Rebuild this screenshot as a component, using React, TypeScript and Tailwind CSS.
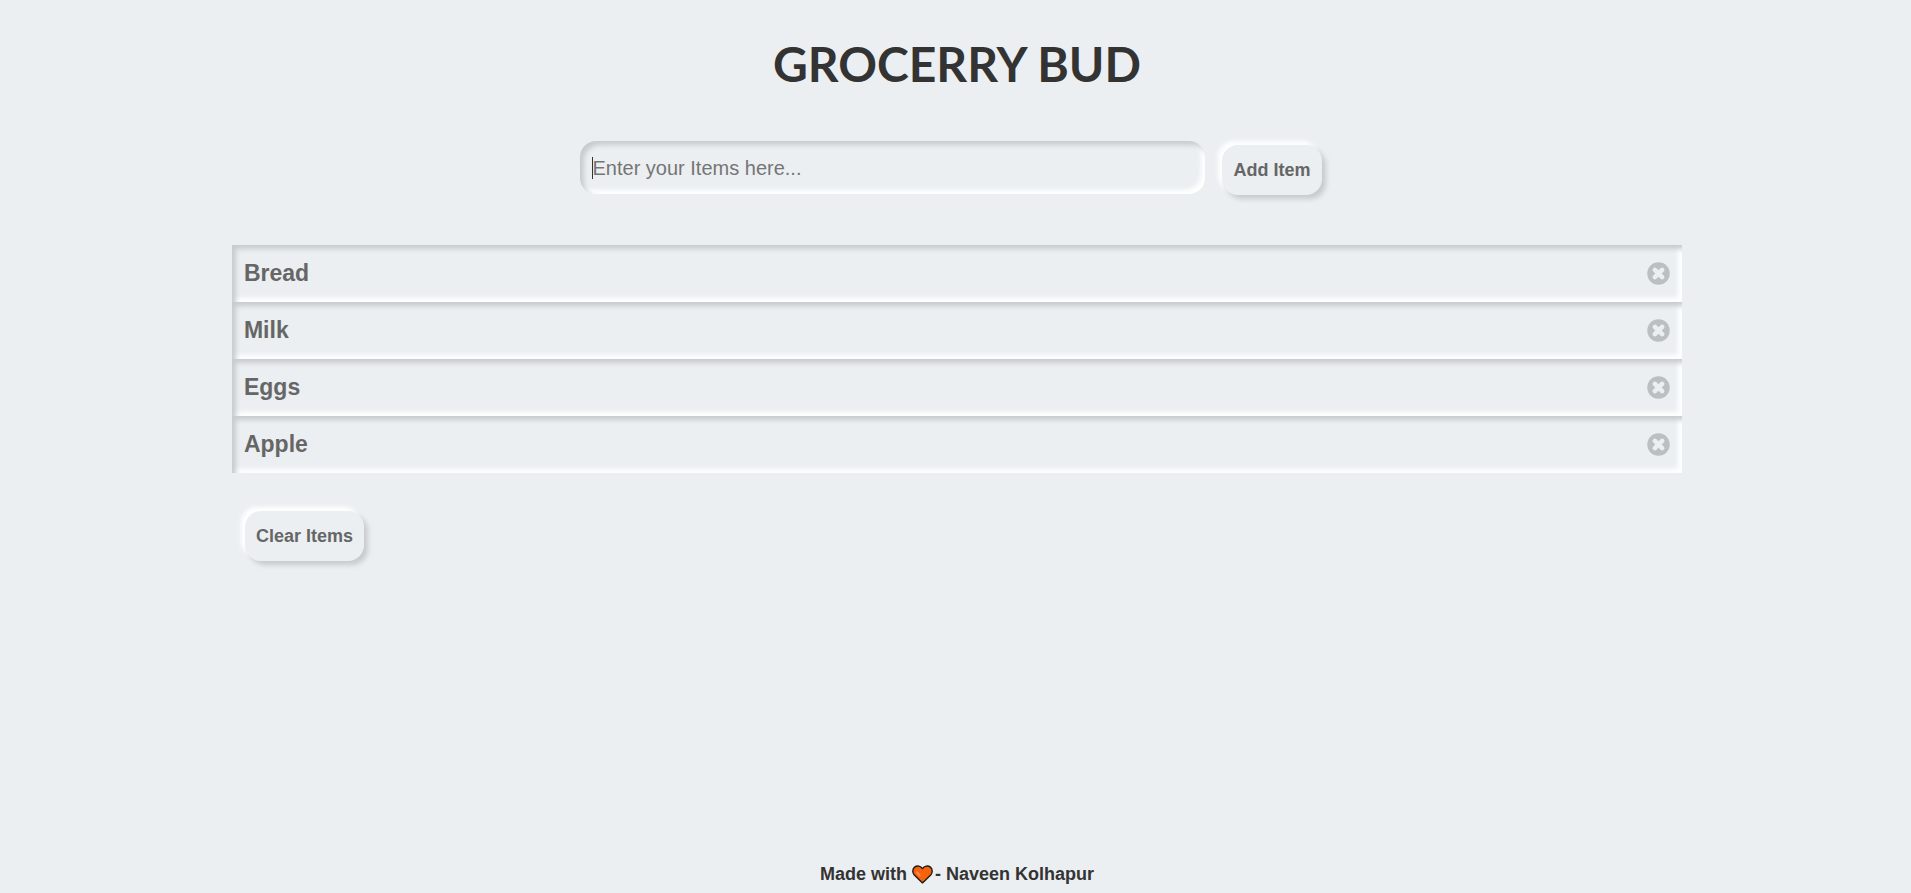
import { useState, type FormEvent } from "react";

const raised =
  "h-[50px] rounded-[16px] px-[11px] text-[18px] font-bold text-[#666] shadow-[4px_4px_5px_#c8cbce,-4px_-4px_5px_#fff]";

function Heart() {
  return (
    <svg viewBox="0 0 20 18" className="h-[19px] w-[21px]" role="img" aria-label="love">
      <path
        d="M10 17 L2 9.200 C.2 7.200 .4 3.700 2.500 2 C4.900 .1 8.300 .8 10 3.400 C11.700 .8 15.100 .1 17.500 2 C19.600 3.700 19.800 7.200 18 9.200 Z"
        fill="#f7630c"
        stroke="#1a1a1a"
        strokeWidth="1.300"
        strokeLinejoin="round"
      />
      <path d="M4.800 7 L7.200 9.800" stroke="#ff8a48" strokeWidth="2" strokeLinecap="round" />
    </svg>
  );
}

function RemoveIcon() {
  return (
    <svg viewBox="0 0 24 24" className="size-[23px]" aria-hidden="true">
      <circle cx="12" cy="12" r="11.700" fill="#bbbfc2" />
      <path d="M8.200 8.200 L15.800 15.800 M15.800 8.200 L8.200 15.800" stroke="#ebeff2" strokeWidth="4.800" strokeLinecap="round" />
    </svg>
  );
}

export default function App() {
  const [items, setItems] = useState(["Bread", "Milk", "Eggs", "Apple"]);
  const [draft, setDraft] = useState("");

  const addItem = (event: FormEvent) => {
    event.preventDefault();
    const name = draft.trim();
    if (name) setItems([...items, name]);
    setDraft("");
  };

  return (
    <div className="flex min-h-screen flex-col items-center bg-[#ebeff2] pl-[3px] font-['Liberation_Sans',Arial,sans-serif]">
      <h1 className="mt-8 font-[Lato,sans-serif] text-[48px] leading-[64px] font-bold text-[#333]">
        GROCERRY BUD
      </h1>

      <form onSubmit={addItem} className="mt-[45px] flex w-full items-start justify-center gap-[17px] pr-7 pl-4">
        <div className="relative w-full max-w-[625px]">
          <input
            aria-label="Grocery item"
            autoFocus
            value={draft}
            onChange={(event) => setDraft(event.target.value)}
            placeholder="Enter your Items here..."
            className="h-[53px] w-full rounded-[16px] px-3 pt-[2px] text-[20px] text-[#333] caret-transparent shadow-[inset_4px_4px_5px_#c8cbce,inset_-4px_-4px_5px_#fff] outline-none placeholder:text-[#757575] not-placeholder-shown:caret-[#333]"
          />
          {draft === "" && (
            <span aria-hidden="true" className="pointer-events-none absolute top-4 left-3 h-[22px] w-px bg-[#333]" />
          )}
        </div>
        <button type="submit" className={`${raised} mt-1 shrink-0`}>
          Add Item
        </button>
      </form>

      <main className="mt-[50px] w-[76%]">
        <ul>
          {items.map((item, index) => (
            <li
              key={index}
              className="flex h-[57px] items-center justify-between px-3 text-[23px] font-bold text-[#666] shadow-[inset_4px_4px_5px_#c8cbce,inset_-4px_-4px_5px_#fff]"
            >
              {item}
              <button
                type="button"
                aria-label={`Remove ${item}`}
                onClick={() => setItems(items.filter((_, i) => i !== index))}
              >
                <RemoveIcon />
              </button>
            </li>
          ))}
        </ul>
        <button type="button" onClick={() => setItems([])} className={`${raised} mt-[38px] ml-[13px]`}>
          Clear Items
        </button>
      </main>

      <footer className="mt-auto flex items-center pb-[6px] text-[18px] leading-[26px] font-bold text-[#333]">
        <span className="mr-[5px]">Made with</span>
        <Heart />
        <span className="ml-[2px]">- Naveen Kolhapur</span>
      </footer>
    </div>
  );
}
